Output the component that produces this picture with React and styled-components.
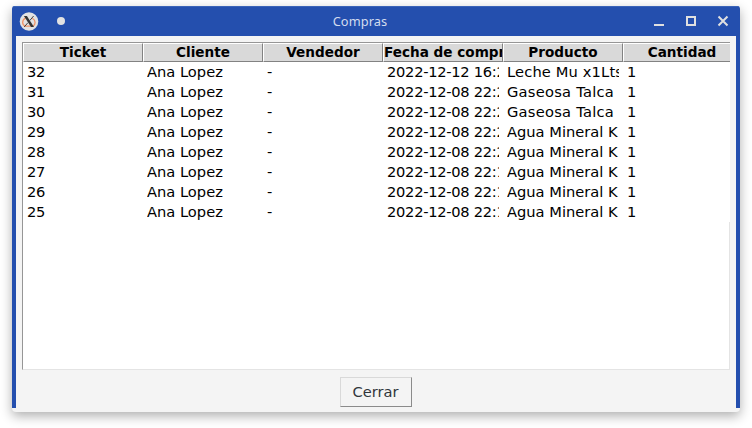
import React from "react";
import styled, { createGlobalStyle } from "styled-components";

const GlobalStyle = createGlobalStyle`
  * { box-sizing: border-box; }
  body { margin: 0; background: #fff; overflow: hidden; }
`;

const Desktop = styled.main`
  width: 752px;
  height: 428px;
  padding: 6px 12px 16px;
  overflow: hidden;
  background: #fff;
`;

const Window = styled.section`
  display: flex;
  flex-direction: column;
  height: 406px;
  border-radius: 3px 3px 4px 4px;
  background: #f4f4f4;
  overflow: hidden;
  box-shadow: 0 4px 12px rgba(0, 0, 0, 0.32);
  font-family: "DejaVu Sans", sans-serif;
`;

const TitleBar = styled.header`
  display: grid;
  grid-template-columns: 64px 1fr 96px;
  align-items: center;
  flex: 0 0 30px;
  background: #244fae;
  border-top: 1px solid #3a63b8;
`;

const TitleIcons = styled.div`
  display: flex;
  align-items: center;
  gap: 18px;
  padding-left: 7px;
`;

const PinDot = styled.span`
  width: 8px;
  height: 8px;
  margin-top: -1px;
  border-radius: 50%;
  background: #e2e2e2;
`;

const Title = styled.h1`
  margin: -2px 0 0;
  text-align: center;
  font: 400 12.8px/20px "Noto Sans", sans-serif;
  letter-spacing: 0.1px;
  color: #d3dcef;
`;

const WindowControls = styled.div`
  display: flex;
  justify-content: flex-end;
  gap: 20px;
  padding-right: 11px;
  margin-top: -1px;
`;

const ControlIcon = styled.svg`
  display: block;
  width: 12px;
  height: 12px;
  fill: none;
  stroke: #e0e0e0;
  stroke-width: 2;
`;

const Body = styled.div`
  display: flex;
  flex-direction: column;
  align-items: center;
  height: 372px;
  padding: 6px 6px 0;
  border: solid #244fae;
  border-width: 0 4px;
`;

const TableFrame = styled.div`
  display: flex;
  flex-direction: column;
  width: 708px;
  height: 328px;
  flex: none;
  overflow: hidden;
  border: 1px solid;
  border-color: #969696 transparent #e4e4e4 #969696;
  border-right: 0;
  background: #fff;
`;

const Row = styled.div`
  display: grid;
  grid-template-columns: repeat(6, 120px);
  flex: none;
  width: 720px;
  height: ${(p) => (p.$header ? 19 : 20)}px;
`;

const EmptyArea = styled.div`
  flex: 1;
  border-right: 1px solid #e4e4e4;
`;

const HeaderCell = styled.div`
  overflow: hidden;
  display: flex;
  justify-content: ${(p) => (p.$clipped ? "flex-start" : "center")};
  border: 1px solid;
  border-color: #fff #828282 #828282 #fff;
  background: #d9d9d9;
  font-size: 13.6px;
  font-weight: 700;
  line-height: 17px;
  white-space: nowrap;
  color: #000;

  &:last-child { padding-right: 2px; }
`;

const Cell = styled.div`
  margin: 0 4px;
  overflow: hidden;
  font-size: 14.67px;
  line-height: 20px;
  letter-spacing: ${(p) => p.$tracking || 0}px;
  white-space: nowrap;
  color: #000;
`;

const CloseButton = styled.button`
  width: 72px;
  height: 30px;
  margin-top: 7px;
  padding: 0 1px 0 0;
  border: 1px solid;
  border-color: #d9d9d9 #8b8b8b #8b8b8b #d9d9d9;
  background: #f4f4f4;
  font: 400 14.67px/28px "DejaVu Sans", sans-serif;
  color: #31363b;
`;

function AppIcon() {
  return (
    <svg width="20" height="20" viewBox="0 0 20 20">
      <circle cx="10" cy="9.5" r="9.3" fill="#e2e2e2" />
      <path
        d="M6.5 6.2C2.8 8 2.7 12.5 6.2 14.2h7.6c3.3-2 3-6-.5-8"
        fill="none"
        stroke="#f09467"
        strokeWidth="1.3"
      />
      <path d="M4.9 4h3l7.1 11h-3z" fill="#333" />
      <path d="M14.6 4 10.8 8.5M8.9 10.7 5.2 15" stroke="#444" strokeWidth="1" />
    </svg>
  );
}

const columns = ["Ticket", "Cliente", "Vendedor", "Fecha de compra", "Producto", "Cantidad"];

const tracking = {
  "Leche Mu x1Lts": 0.14,
  "Gaseosa Talca": 0.24,
};

const purchases = [
  ["32", "2022-12-12 16:22", "Leche Mu x1Lts"],
  ["31", "2022-12-08 22:22", "Gaseosa Talca"],
  ["30", "2022-12-08 22:22", "Gaseosa Talca"],
  ["29", "2022-12-08 22:22", "Agua Mineral K"],
  ["28", "2022-12-08 22:22", "Agua Mineral K"],
  ["27", "2022-12-08 22:12", "Agua Mineral K"],
  ["26", "2022-12-08 22:12", "Agua Mineral K"],
  ["25", "2022-12-08 22:12", "Agua Mineral K"],
];

export default function App() {
  return (
    <Desktop>
      <GlobalStyle />
      <Window>
        <TitleBar>
          <TitleIcons>
            <AppIcon />
            <PinDot />
          </TitleIcons>
          <Title>Compras</Title>
          <WindowControls>
            <ControlIcon viewBox="0 0 12 12"><path d="M1 10h10" /></ControlIcon>
            <ControlIcon viewBox="0 0 12 12"><path d="M2 2h8v8H2z" /></ControlIcon>
            <ControlIcon viewBox="0 0 12 12"><path d="m1.5 1.5 9 9m0-9-9 9" /></ControlIcon>
          </WindowControls>
        </TitleBar>
        <Body>
          <TableFrame>
            <Row $header>
              {columns.map((name) => (
                <HeaderCell key={name} $clipped={name.length > 12}>{name}</HeaderCell>
              ))}
            </Row>
            {purchases.map(([ticket, date, product]) => (
              <Row key={ticket}>
                <Cell $tracking={-0.2}>{ticket}</Cell>
                <Cell>Ana Lopez</Cell>
                <Cell>-</Cell>
                <Cell $tracking={-0.28}>{date}</Cell>
                <Cell $tracking={tracking[product]}>{product}</Cell>
                <Cell>1</Cell>
              </Row>
            ))}
            <EmptyArea />
          </TableFrame>
          <CloseButton>Cerrar</CloseButton>
        </Body>
      </Window>
    </Desktop>
  );
}
